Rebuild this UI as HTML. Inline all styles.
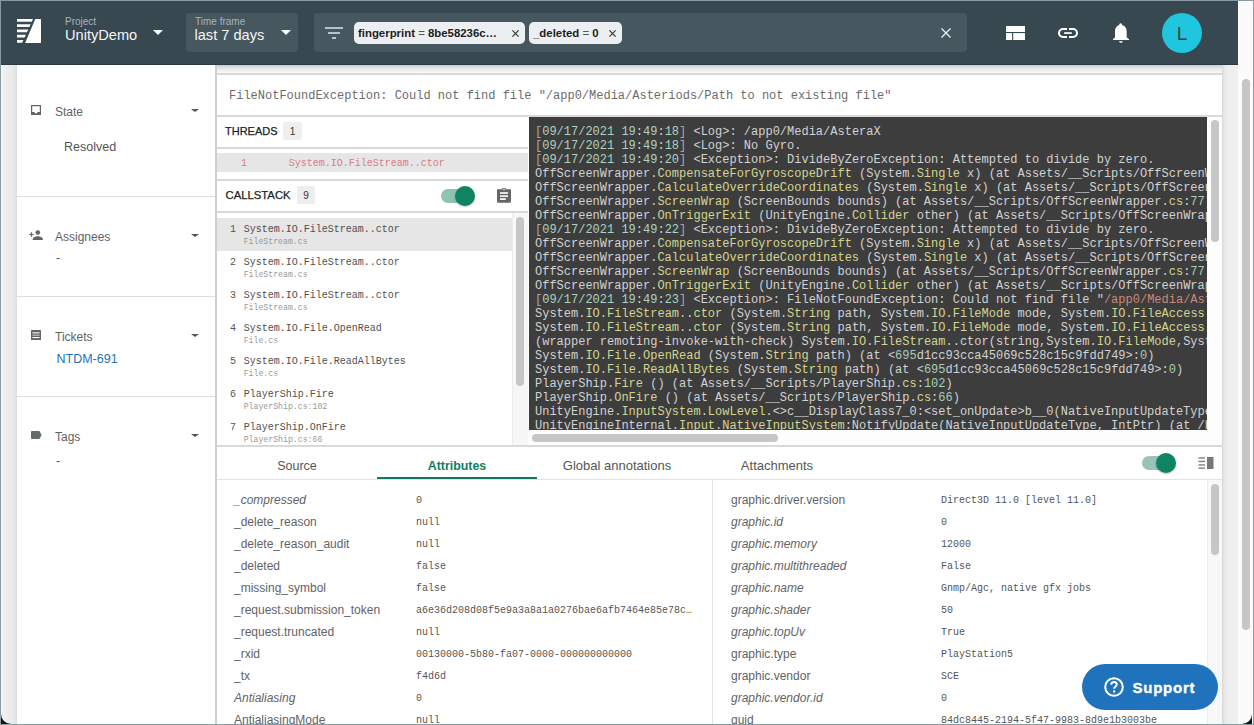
<!DOCTYPE html>
<html><head><meta charset="utf-8">
<style>
*{box-sizing:border-box;margin:0;padding:0}
html,body{width:1254px;height:725px;overflow:hidden;background:#ededed;font-family:"Liberation Sans",sans-serif}
.a{position:absolute}
i{font-style:normal}
#frame{position:absolute;left:0;top:0;width:1254px;height:725px;border:1px solid #879ba3;border-right:1px solid #8c9ca6;pointer-events:none;z-index:50}
#hdr{position:absolute;left:1px;top:1px;width:1237px;height:64px;background:#384851}
.lbl{position:absolute;font-size:10px;color:#a7b4ba;line-height:12px;white-space:nowrap}
.val{position:absolute;font-size:14.6px;color:#f3f6f7;line-height:18px;white-space:nowrap}
.tri{position:absolute;width:0;height:0;border-left:5px solid transparent;border-right:5px solid transparent;border-top:5px solid #fff}
.box{position:absolute;background:#47575f;border-radius:4px}
.chip{position:absolute;background:#eceff1;border-radius:5px;height:22px;top:22px;font-size:11.4px;font-weight:bold;color:#1d1d1d;line-height:22px;white-space:nowrap}
.chip .eq{font-weight:normal;color:#555}
.chip .x{position:absolute;top:0;font-weight:normal;font-size:13px;color:#333}
/* sidebar */
#side{position:absolute;left:17px;top:65px;width:198px;height:660px;background:#fff}
.sep{position:absolute;left:17px;width:198px;height:1px;background:#dedede}
.stitle{position:absolute;left:55px;font-size:12px;color:#5f6368;line-height:14px}
.sval{position:absolute;font-size:12.5px;color:#555;line-height:15px}
.stri{position:absolute;left:191px;width:0;height:0;border-left:4px solid transparent;border-right:4px solid transparent;border-top:3.2px solid #555}
/* main */
.hl{position:absolute;height:2px;background:#d9d9d9}
.mono{font-family:"Liberation Mono",monospace}
#console{position:absolute;left:529px;top:117px;width:678px;height:313px;background:#3d3d3d;overflow:hidden;padding:8px 0 0 6px;font-family:"Liberation Mono",monospace;font-size:12px;line-height:14px;color:#d2d2d2;white-space:pre}
#console .br{color:#a8a8a8}
#console .ts{color:#abd3c3}
#console .w{color:#d2d2d2}
#console .fn{color:#d3d590}
#console .nm{color:#a6cdb6}
#console .st{color:#c98a78}
.csi{position:absolute;left:217px;width:295px;height:33px}
.csi.sel{background:#e6e6e6}
.csn{position:absolute;left:13px;top:5px;font-family:"Liberation Mono",monospace;font-size:10px;line-height:13px;color:#555}
.csname{position:absolute;left:26.7px;top:5px;font-family:"Liberation Mono",monospace;font-size:10px;line-height:13px;color:#505050;white-space:nowrap}
.csf{position:absolute;left:26.7px;top:18.5px;font-family:"Liberation Mono",monospace;font-size:8.2px;line-height:10px;color:#999;white-space:nowrap}
.tab{position:absolute;top:457px;width:160px;text-align:center;font-size:12.5px;line-height:18px;color:#555}
.ak{position:absolute;font-size:12px;line-height:22px;color:#5f6368;white-space:nowrap;margin-top:-10px}
.ak.it{font-style:italic}
.av{position:absolute;font-family:"Liberation Mono",monospace;font-size:10px;line-height:22px;color:#555;white-space:nowrap;margin-top:-9.5px}
.badge{position:absolute;background:#eeeeee;border-radius:2px;font-size:10px;color:#333;text-align:center;line-height:20px}
.toggle-track{position:absolute;height:14px;width:30px;border-radius:7px;background:#8fc4b3}
.toggle-thumb{position:absolute;width:20px;height:20px;border-radius:10px;background:#0f8462;box-shadow:0 1px 2px rgba(0,0,0,.25)}
.sb{position:absolute;background:#c6c6c6;border-radius:4px}
</style></head><body>
<div id="frame"></div>

<!-- HEADER -->
<div id="hdr"></div>
<div class="a" style="left:1px;top:64px;width:1237px;height:1px;background:#2e3840"></div>
<svg class="a" style="left:17px;top:19px" width="24" height="24" viewBox="0 0 24 24">
  <polygon points="18.3,0 24,0 24,24 8.1,24" fill="#fff"/>
  <polygon points="0,0 16,0 14.8,2.8 0,2.8" fill="#fff"/>
  <polygon points="0,5.2 13.6,5.2 12.4,8 0,8" fill="#fff"/>
  <polygon points="0,10.4 11.2,10.4 10,13.2 0,13.2" fill="#fff"/>
  <polygon points="0,15.7 8.8,15.7 7.6,18.5 0,18.5" fill="#fff"/>
  <polygon points="0,20.9 6.4,20.9 5.2,23.8 0,23.8" fill="#fff"/>
</svg>
<div class="lbl" style="left:65px;top:16px">Project</div>
<div class="val" style="left:65px;top:26px">UnityDemo</div>
<div class="tri" style="left:153px;top:30px"></div>

<div class="box" style="left:186px;top:13px;width:112px;height:39px"></div>
<div class="lbl" style="left:195px;top:16px">Time frame</div>
<div class="val" style="left:194.5px;top:26px">last 7 days</div>
<div class="tri" style="left:281px;top:30px"></div>

<div class="box" style="left:314px;top:13px;width:653px;height:39px"></div>
<svg class="a" style="left:325px;top:27px" width="18" height="12" viewBox="0 0 18 12">
  <rect x="0" y="0" width="18" height="2" fill="#b4c3c9"/>
  <rect x="3" y="5" width="12" height="2" fill="#b4c3c9"/>
  <rect x="7" y="10" width="4" height="2" fill="#b4c3c9"/>
</svg>
<div class="chip" style="left:354px;width:171px"><span style="position:absolute;left:4px">fingerprint <span class="eq">=</span> 8be58236c…</span><svg class="x" style="left:158px;top:8px" width="7" height="7" viewBox="0 0 7 7"><path d="M0.4,0.4 L6.6,6.6 M6.6,0.4 L0.4,6.6" stroke="#333" stroke-width="1.15"/></svg></div>
<div class="chip" style="left:529px;width:93px"><span style="position:absolute;left:4px">_deleted <span class="eq">=</span> 0</span><svg class="x" style="left:80px;top:8px" width="7" height="7" viewBox="0 0 7 7"><path d="M0.4,0.4 L6.6,6.6 M6.6,0.4 L0.4,6.6" stroke="#333" stroke-width="1.15"/></svg></div>
<svg class="a" style="left:941px;top:28px" width="10" height="10" viewBox="0 0 10 10"><path d="M0.5,0.5 L9.5,9.5 M9.5,0.5 L0.5,9.5" stroke="#eef2f3" stroke-width="1.3"/></svg>

<!-- layout icon -->
<svg class="a" style="left:1006px;top:26px" width="19" height="14" viewBox="0 0 19 14">
  <rect x="0" y="0" width="19" height="6" fill="#fff"/>
  <rect x="0" y="7.1" width="6.1" height="6.9" fill="#fff"/>
  <rect x="7.2" y="7.1" width="11.8" height="6.9" fill="#fff"/>
</svg>
<!-- link icon -->
<svg class="a" style="left:1058px;top:28px" width="20" height="10" viewBox="0 0 20 10">
  <path d="M9,1 H5 A4,4 0 0 0 5,9 H9 M11,1 H15 A4,4 0 0 1 15,9 H11" stroke="#fff" stroke-width="2" fill="none"/>
  <rect x="6.1" y="4.2" width="7.7" height="1.7" fill="#fff"/>
</svg>
<!-- bell -->
<svg class="a" style="left:1112px;top:22px" width="18" height="22" viewBox="0 0 18 22">
  <path d="M8.6,1.2 C9.6,1.2 10,2 10,3 C13,3.8 14.7,6 14.7,9.5 V15.5 L17,17 V18 H1 V17 L3,15.5 V9.5 C3,6 4.6,3.8 7.3,3 C7.3,2 7.7,1.2 8.6,1.2 Z" fill="#fff"/>
  <path d="M6.8,19.2 H11 L9.8,20.8 H8 Z" fill="#fff"/>
</svg>
<div class="a" style="left:1162px;top:13px;width:40px;height:40px;border-radius:20px;background:#1fc6de"></div>
<div class="a" style="left:1162px;top:13px;width:40px;height:40px;text-align:center;font-size:19px;line-height:41px;color:#263a46">L</div>

<!-- right page scrollbar -->
<div class="a" style="left:1222px;top:65px;width:16px;height:660px;background:linear-gradient(to right,#d6d6d6 0px,#e6e6e6 2px,#eeeeee 6px,#efefef 16px)"></div>
<div class="a" style="left:1238px;top:1px;width:15px;height:724px;background:#fbfbfb"></div>
<div class="sb" style="left:1242px;top:79px;width:8px;height:551px"></div>

<!-- SIDEBAR -->
<div class="a" style="left:1px;top:65px;width:16px;height:660px;background:linear-gradient(to right,#f4f7fa 0px,#eeeef0 4px,#ebebeb 11px,#e2e2e2 15px,#dadada 16px)"></div>
<div id="side"></div>
<div class="a" style="left:215px;top:65px;width:2px;height:660px;background:#cfcfcf"></div>
<div class="sep" style="top:196px"></div>
<div class="sep" style="top:296px"></div>
<div class="sep" style="top:396px"></div>

<svg class="a" style="left:31px;top:105px" width="10" height="10" viewBox="0 0 10 10">
  <path d="M0.6,0.6 H9.4 V9.4 H0.6 Z" stroke="#5f6664" stroke-width="1.2" fill="none"/>
  <path d="M0,7 H3.2 L5,8.9 L6.8,7 H10 V10 H0 Z" fill="#5f6664"/>
</svg>
<div class="stitle" style="top:105px">State</div>
<div class="stri" style="top:108.5px"></div>
<div class="sval" style="left:64px;top:140px">Resolved</div>

<svg class="a" style="left:29px;top:230px" width="14" height="10" viewBox="0 0 14 10">
  <circle cx="8.8" cy="2.5" r="2.3" fill="#5f6664"/>
  <path d="M3.6,10 C3.6,7.2 6.5,6.2 8.8,6.2 C11.1,6.2 14,7.2 14,10 Z" fill="#5f6664"/>
  <rect x="0.3" y="3.9" width="4.3" height="1.2" fill="#5f6664"/>
  <rect x="1.85" y="2.3" width="1.2" height="4.4" fill="#5f6664"/>
</svg>
<div class="stitle" style="top:229.5px">Assignees</div>
<div class="stri" style="top:233.5px"></div>
<div class="sval" style="left:56px;top:251px">-</div>

<svg class="a" style="left:31px;top:330px" width="10" height="10" viewBox="0 0 10 10">
  <rect x="0" y="0" width="10" height="10" rx="0.6" fill="#5f6664"/>
  <rect x="1.4" y="2.3" width="7.2" height="1.1" fill="#fff"/>
  <rect x="1.4" y="4.4" width="7.2" height="1.6" fill="#a4aaa8"/>
  <rect x="1.4" y="7" width="7.2" height="1.1" fill="#fff"/>
</svg>
<div class="stitle" style="top:329.5px">Tickets</div>
<div class="stri" style="top:333.5px"></div>
<div class="sval" style="left:56.5px;top:351.5px;color:#1f73b7">NTDM-691</div>

<svg class="a" style="left:31px;top:431px" width="11" height="8" viewBox="0 0 11 8">
  <path d="M1,0 H8.4 L10.6,4 L8.4,8 H1 C0.4,8 0,7.6 0,7 V1 C0,0.4 0.4,0 1,0 Z" fill="#646b69"/>
</svg>
<div class="stitle" style="top:429.5px">Tags</div>
<div class="stri" style="top:433.5px"></div>
<div class="sval" style="left:56px;top:454px">-</div>

<!-- MAIN -->
<div class="a" style="left:217px;top:65px;width:1005px;height:8px;background:linear-gradient(#c6cbd4 0px,#d8dce0 2px,#e8eaea 4px,#f1f1ef 6px,#fbfbfb 8px)"></div>
<div class="hl" style="left:217px;top:73px;width:1005px"></div>
<div class="a" style="left:217px;top:75px;width:1005px;height:40px;background:#fff"></div>
<div class="a mono" style="left:229px;top:89px;font-size:12px;line-height:14px;color:#6c6c6c;white-space:pre">FileNotFoundException: Could not find file "/app0/Media/Asteriods/Path to not existing file"</div>
<div class="hl" style="left:217px;top:115px;width:1005px"></div>

<!-- left panel -->
<div class="a" style="left:217px;top:117px;width:312px;height:328px;background:#fff"></div>
<div class="a" style="left:225px;top:124px;font-size:11px;line-height:14px;color:#222;-webkit-text-stroke:0.25px #222">THREADS</div>
<div class="badge" style="left:283px;top:122px;width:19px;height:18px">1</div>
<div class="hl" style="left:217px;top:147px;width:311px"></div>
<div class="a" style="left:217px;top:153px;width:311px;height:19px;background:#e6e6e6"></div>
<div class="a mono" style="left:241px;top:157px;font-size:10px;line-height:13px;color:#dc7a89">1</div>
<div class="a mono" style="left:288.8px;top:157px;font-size:10px;line-height:13px;color:#dc7a89">System.IO.FileStream..ctor</div>
<div class="hl" style="left:217px;top:178.5px;width:311px"></div>
<div class="a" style="left:225.5px;top:187.5px;font-size:11.3px;line-height:14px;color:#222;-webkit-text-stroke:0.25px #222">CALLSTACK</div>
<div class="badge" style="left:297px;top:186px;width:18px;height:18px">9</div>
<div class="toggle-track" style="left:441px;top:189px"></div>
<div class="toggle-thumb" style="left:455px;top:186px"></div>
<svg class="a" style="left:497px;top:188px" width="14" height="15" viewBox="0 0 14 15">
  <path d="M1.2,1.2 H4.8 C5.1,0.4 6,0 7,0 C8,0 8.9,0.4 9.2,1.2 H12.8 C13.5,1.2 14,1.7 14,2.4 V13.6 C14,14.3 13.5,14.8 12.8,14.8 H1.2 C0.5,14.8 0,14.3 0,13.6 V2.4 C0,1.7 0.5,1.2 1.2,1.2 Z" fill="#666"/>
  <rect x="3" y="4.2" width="8" height="1.6" fill="#fff"/>
  <rect x="3" y="7.3" width="8" height="1.6" fill="#fff"/>
  <rect x="3" y="10.2" width="5.8" height="1.7" fill="#fff"/>
  <circle cx="7" cy="1.6" r="0.8" fill="#fff"/>
</svg>
<div class="hl" style="left:217px;top:211px;width:311px"></div>
<div class="a" style="left:217px;top:213px;width:311px;height:232px;overflow:hidden">
<div style="position:absolute;left:-217px;top:-213px;width:1254px;height:725px">
<div class="csi sel" style="top:218px"><span class="csn">1</span><span class="csname">System.IO.FileStream..ctor</span><span class="csf">FileStream.cs</span></div>
<div class="csi" style="top:251px"><span class="csn">2</span><span class="csname">System.IO.FileStream..ctor</span><span class="csf">FileStream.cs</span></div>
<div class="csi" style="top:284px"><span class="csn">3</span><span class="csname">System.IO.FileStream..ctor</span><span class="csf">FileStream.cs</span></div>
<div class="csi" style="top:317px"><span class="csn">4</span><span class="csname">System.IO.File.OpenRead</span><span class="csf">File.cs</span></div>
<div class="csi" style="top:350px"><span class="csn">5</span><span class="csname">System.IO.File.ReadAllBytes</span><span class="csf">File.cs</span></div>
<div class="csi" style="top:383px"><span class="csn">6</span><span class="csname">PlayerShip.Fire</span><span class="csf">PlayerShip.cs:102</span></div>
<div class="csi" style="top:416px"><span class="csn">7</span><span class="csname">PlayerShip.OnFire</span><span class="csf">PlayerShip.cs:66</span></div>
<div class="csi" style="top:449px"><span class="csn">8</span><span class="csname">UnityEngine.InputSystem.LowLevel</span><span class="csf">InputManager.cs</span></div>

</div></div>
<div class="a" style="left:512px;top:213px;width:16px;height:232px;background:#f7f7f7;border-left:1px solid #ececec"></div>
<div class="sb" style="left:516px;top:217px;width:8px;height:168.5px"></div>

<!-- console -->
<div id="console"><div><i class="br">[</i><i class="ts">09/17/2021 19<i class="w">:</i>49<i class="w">:</i>18</i><i class="br">]</i> &lt;Log&gt;: /app0/Media/AsteraX</div><div><i class="br">[</i><i class="ts">09/17/2021 19<i class="w">:</i>49<i class="w">:</i>18</i><i class="br">]</i> &lt;Log&gt;: No Gyro.</div><div><i class="br">[</i><i class="ts">09/17/2021 19<i class="w">:</i>49<i class="w">:</i>20</i><i class="br">]</i> &lt;Exception&gt;: DivideByZeroException: Attempted to divide by zero.</div><div>OffScreenWrapper.<i class="fn">CompensateForGyroscopeDrift</i> (System.<i class="fn">Single</i> x) (at Assets/__Scripts/OffScreenWrapper.<i class="fn">cs</i>:<i class="nm">89</i>)</div><div>OffScreenWrapper.<i class="fn">CalculateOverrideCoordinates</i> (System.<i class="fn">Single</i> x) (at Assets/__Scripts/OffScreenWrapper.<i class="fn">cs</i>:<i class="nm">60</i>)</div><div>OffScreenWrapper.<i class="fn">ScreenWrap</i> (ScreenBounds bounds) (at Assets/__Scripts/OffScreenWrapper.<i class="fn">cs</i>:<i class="nm">77</i>)</div><div>OffScreenWrapper.<i class="fn">OnTriggerExit</i> (UnityEngine.<i class="fn">Collider</i> other) (at Assets/__Scripts/OffScreenWrapper.<i class="fn">cs</i>:<i class="nm">44</i>)</div><div><i class="br">[</i><i class="ts">09/17/2021 19<i class="w">:</i>49<i class="w">:</i>22</i><i class="br">]</i> &lt;Exception&gt;: DivideByZeroException: Attempted to divide by zero.</div><div>OffScreenWrapper.<i class="fn">CompensateForGyroscopeDrift</i> (System.<i class="fn">Single</i> x) (at Assets/__Scripts/OffScreenWrapper.<i class="fn">cs</i>:<i class="nm">89</i>)</div><div>OffScreenWrapper.<i class="fn">CalculateOverrideCoordinates</i> (System.<i class="fn">Single</i> x) (at Assets/__Scripts/OffScreenWrapper.<i class="fn">cs</i>:<i class="nm">60</i>)</div><div>OffScreenWrapper.<i class="fn">ScreenWrap</i> (ScreenBounds bounds) (at Assets/__Scripts/OffScreenWrapper.<i class="fn">cs</i>:<i class="nm">77</i>)</div><div>OffScreenWrapper.<i class="fn">OnTriggerExit</i> (UnityEngine.<i class="fn">Collider</i> other) (at Assets/__Scripts/OffScreenWrapper.<i class="fn">cs</i>:<i class="nm">44</i>)</div><div><i class="br">[</i><i class="ts">09/17/2021 19<i class="w">:</i>49<i class="w">:</i>23</i><i class="br">]</i> &lt;Exception&gt;: FileNotFoundException: Could not find file "<i class="st">/app0/Media/Asteriods/Path</i>"</div><div>System.<i class="fn">IO</i>.<i class="fn">FileStream</i>..<i class="fn">ctor</i> (System.<i class="fn">String</i> path, System.<i class="fn">IO</i>.<i class="fn">FileMode</i> mode, System.<i class="fn">IO</i>.<i class="fn">FileAccess</i> access)</div><div>System.<i class="fn">IO</i>.<i class="fn">FileStream</i>..<i class="fn">ctor</i> (System.<i class="fn">String</i> path, System.<i class="fn">IO</i>.<i class="fn">FileMode</i> mode, System.<i class="fn">IO</i>.<i class="fn">FileAccess</i> access)</div><div>(wrapper remoting-invoke-with-check) System.<i class="fn">IO</i>.<i class="fn">FileStream</i>..ctor(string,System.<i class="fn">IO</i>.<i class="fn">FileMode</i>,System.<i class="fn">IO</i>.<i class="fn">FileAccess</i>)</div><div>System.<i class="fn">IO</i>.<i class="fn">File</i>.<i class="fn">OpenRead</i> (System.<i class="fn">String</i> path) (at &lt;<i class="nm">695</i>d1cc93cca45069c528c15c9fdd749&gt;:<i class="nm">0</i>)</div><div>System.<i class="fn">IO</i>.<i class="fn">File</i>.<i class="fn">ReadAllBytes</i> (System.<i class="fn">String</i> path) (at &lt;<i class="nm">695</i>d1cc93cca45069c528c15c9fdd749&gt;:<i class="nm">0</i>)</div><div>PlayerShip.<i class="fn">Fire</i> () (at Assets/__Scripts/PlayerShip.<i class="fn">cs</i>:<i class="nm">102</i>)</div><div>PlayerShip.<i class="fn">OnFire</i> () (at Assets/__Scripts/PlayerShip.<i class="fn">cs</i>:<i class="nm">66</i>)</div><div>UnityEngine.<i class="fn">InputSystem</i>.<i class="fn">LowLevel</i>.&lt;&gt;c__DisplayClass7_0:&lt;set_onUpdate&gt;b__0(NativeInputUpdateType)</div><div>UnityEngineInternal.<i class="fn">Input</i>.<i class="fn">NativeInputSystem</i>:NotifyUpdate(NativeInputUpdateType, IntPtr) (at /home/bokken)</div></div>
<div class="a" style="left:529px;top:430px;width:678px;height:15px;background:#fdfdfd"></div>
<div class="sb" style="left:532px;top:434px;width:246px;height:8px"></div>
<div class="a" style="left:1207px;top:117px;width:15px;height:328px;background:#fdfdfd"></div>
<div class="sb" style="left:1211px;top:120px;width:8px;height:122px"></div>

<div class="hl" style="left:217px;top:445px;width:1005px"></div>

<!-- bottom -->
<div class="a" style="left:217px;top:447px;width:1005px;height:278px;background:#fff"></div>
<div class="a" style="left:217px;top:479px;width:1005px;height:1px;background:#e3e3e3"></div>
<div class="tab" style="left:217px">Source</div>
<div class="tab" style="left:377px;color:#137e62;font-weight:bold;font-size:12.4px">Attributes</div>
<div class="tab" style="left:537px;font-size:13px">Global annotations</div>
<div class="tab" style="left:697px;font-size:13px">Attachments</div>
<div class="a" style="left:377px;top:477px;width:160px;height:2px;background:#127564"></div>
<div class="toggle-track" style="left:1142px;top:456px;background:#98c3b6"></div>
<div class="toggle-thumb" style="left:1156px;top:453px"></div>
<svg class="a" style="left:1198px;top:457px" width="16" height="12" viewBox="0 0 16 12">
  <rect x="0.5" y="0.3" width="6.5" height="1.3" fill="#777"/>
  <rect x="0.5" y="3.8" width="6.5" height="1.3" fill="#777"/>
  <rect x="0.5" y="7.3" width="6.5" height="1.3" fill="#777"/>
  <rect x="0.5" y="10.5" width="6.5" height="1.3" fill="#777"/>
  <rect x="9" y="0" width="6.5" height="12" fill="#777"/>
</svg>
<div class="a" style="left:712px;top:480px;width:1px;height:245px;background:#e3e3e3"></div>
<div class="ak it" style="left:234px;top:499px">_compressed</div><div class="av" style="left:416px;top:499px">0</div>
<div class="ak" style="left:234px;top:521px">_delete_reason</div><div class="av" style="left:416px;top:521px">null</div>
<div class="ak" style="left:234px;top:543px">_delete_reason_audit</div><div class="av" style="left:416px;top:543px">null</div>
<div class="ak" style="left:234px;top:565px">_deleted</div><div class="av" style="left:416px;top:565px">false</div>
<div class="ak" style="left:234px;top:587px">_missing_symbol</div><div class="av" style="left:416px;top:587px">false</div>
<div class="ak" style="left:234px;top:609px">_request.submission_token</div><div class="av" style="left:416px;top:609px">a6e36d208d08f5e9a3a8a1a0276bae6afb7464e85e78c…</div>
<div class="ak" style="left:234px;top:631px">_request.truncated</div><div class="av" style="left:416px;top:631px">null</div>
<div class="ak" style="left:234px;top:653px">_rxid</div><div class="av" style="left:416px;top:653px">00130000-5b80-fa07-0000-000000000000</div>
<div class="ak" style="left:234px;top:675px">_tx</div><div class="av" style="left:416px;top:675px">f4d6d</div>
<div class="ak it" style="left:234px;top:697px">Antialiasing</div><div class="av" style="left:416px;top:697px">0</div>
<div class="ak" style="left:234px;top:719px">AntialiasingMode</div><div class="av" style="left:416px;top:719px">null</div>
<div class="ak" style="left:731px;top:499px">graphic.driver.version</div><div class="av" style="left:941px;top:499px">Direct3D 11.0 [level 11.0]</div>
<div class="ak it" style="left:731px;top:521px">graphic.id</div><div class="av" style="left:941px;top:521px">0</div>
<div class="ak it" style="left:731px;top:543px">graphic.memory</div><div class="av" style="left:941px;top:543px">12000</div>
<div class="ak it" style="left:731px;top:565px">graphic.multithreaded</div><div class="av" style="left:941px;top:565px">False</div>
<div class="ak it" style="left:731px;top:587px">graphic.name</div><div class="av" style="left:941px;top:587px">Gnmp/Agc, native gfx jobs</div>
<div class="ak it" style="left:731px;top:609px">graphic.shader</div><div class="av" style="left:941px;top:609px">50</div>
<div class="ak it" style="left:731px;top:631px">graphic.topUv</div><div class="av" style="left:941px;top:631px">True</div>
<div class="ak" style="left:731px;top:653px">graphic.type</div><div class="av" style="left:941px;top:653px">PlayStation5</div>
<div class="ak" style="left:731px;top:675px">graphic.vendor</div><div class="av" style="left:941px;top:675px">SCE</div>
<div class="ak it" style="left:731px;top:697px">graphic.vendor.id</div><div class="av" style="left:941px;top:697px">0</div>
<div class="ak" style="left:731px;top:719px">guid</div><div class="av" style="left:941px;top:719px">84dc8445-2194-5f47-9983-8d9e1b3003be</div>

<div class="a" style="left:1207px;top:480px;width:15px;height:245px;background:#f8f8f8;border-left:1px solid #ededed"></div>
<div class="sb" style="left:1211px;top:484px;width:8px;height:71px"></div>

<!-- support -->
<div class="a" style="left:1082px;top:664px;width:136px;height:46px;border-radius:23px;background:#1e73bc"></div>
<svg class="a" style="left:1104px;top:677px" width="20" height="20" viewBox="0 0 20 20">
  <circle cx="10" cy="10" r="8.8" stroke="#fff" stroke-width="2" fill="none"/>
  <path d="M7.2,7.8 C7.2,6.1 8.4,5 10,5 C11.6,5 12.8,6.1 12.8,7.6 C12.8,9.5 10.2,9.6 10.2,11.8" stroke="#fff" stroke-width="1.9" fill="none"/>
  <rect x="9.1" y="13.4" width="2.1" height="2.1" fill="#fff"/>
</svg>
<div class="a" style="left:1132.5px;top:677.8px;font-size:15px;font-weight:bold;line-height:20px;letter-spacing:0.75px;color:#fff;-webkit-text-stroke:0.35px #fff">Support</div>

<svg class="a" style="left:1px;top:714px;z-index:40" width="10" height="10" viewBox="0 0 10 10"><path d="M0,0 A10,10 0 0 0 10,10 L0,10 Z" fill="#141414"/></svg>
<svg class="a" style="left:1242px;top:714px;z-index:40" width="10" height="10" viewBox="0 0 10 10"><path d="M10,0 A10,10 0 0 1 0,10 L10,10 Z" fill="#141414"/></svg>
</body></html>
